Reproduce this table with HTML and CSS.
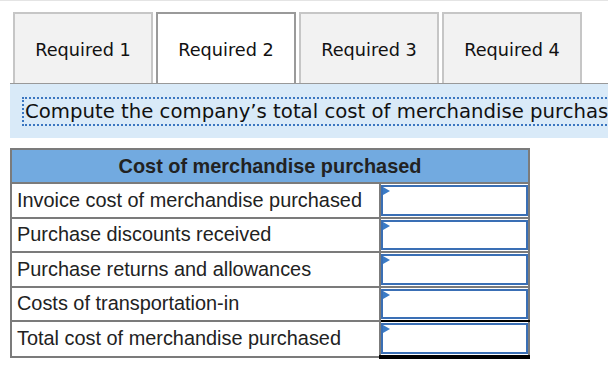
FILE: index.html
```html
<!DOCTYPE html>
<html lang="en">
<head>
  <meta charset="UTF-8" />
  <meta name="viewport" content="width=device-width, initial-scale=1.0" />
  <title>Cost of merchandise purchased</title>
  <link rel="stylesheet" href="styles.css">
</head>
<body>
  <div class="tabs">
    <div class="tab">Required 1</div>
    <div class="tab active">Required 2</div>
    <div class="tab">Required 3</div>
    <div class="tab">Required 4</div>
  </div>
  <div class="prompt">
    <div class="prompt-text">Compute the company’s total cost of merchandise purchased.</div>
  </div>
  <table class="worksheet">
    <tr><th colspan="2">Cost of merchandise purchased</th></tr>
    <tr>
      <td class="label">Invoice cost of merchandise purchased</td>
      <td class="entry"><div class="field"><input type="text"></div></td>
    </tr>
    <tr>
      <td class="label">Purchase discounts received</td>
      <td class="entry"><div class="field"><input type="text"></div></td>
    </tr>
    <tr>
      <td class="label">Purchase returns and allowances</td>
      <td class="entry"><div class="field"><input type="text"></div></td>
    </tr>
    <tr>
      <td class="label">Costs of transportation-in</td>
      <td class="entry single"><div class="field"><input type="text"></div></td>
    </tr>
    <tr>
      <td class="label">Total cost of merchandise purchased</td>
      <td class="entry double"><div class="field"><input type="text"></div></td>
    </tr>
  </table>
</body>
</html>
```

FILE: styles.css
```css
body { margin: 0; font-family: "DejaVu Sans", Verdana, sans-serif; color: #111; background: #fff; border-top: 1px solid #e4e4e4; overflow: hidden; }

/* tab strip */
.tabs { display: flex; gap: 3px; margin: 11px 0 0 10px; padding-left: 3px; border-bottom: 1px solid #999; }
.tab { width: 140px; height: 71px; box-sizing: border-box; border: 2px solid #c6c6c6; border-bottom: 0; background: #f2f2f2; display: flex; align-items: center; justify-content: center; font-size: 17.7px; padding-top: 3px; }
.tab.active { background: #fff; border-color: #9a9a9a; }

/* instructions */
.prompt { margin-left: 10px; height: 54px; box-sizing: border-box; padding: 13px 0 0 12px; background: #d9eaf8; }
.prompt-text { display: inline-block; white-space: nowrap; border: 2px dotted #3a76c0; padding: 0 2px 0 1px; font-size: 19.7px; line-height: 25px; }

/* worksheet table */
.worksheet { margin: 10px 0 0 10px; width: 520px; border-collapse: collapse; border: 2px solid #7b7b7b; font-family: "Liberation Sans", Arial, sans-serif; font-size: 19.9px; color: #222; }
.worksheet th { background: #72aae0; height: 32px; padding: 0; border: 2px solid #7b7b7b; font-weight: bold; }
.worksheet td { border: 2px solid #7b7b7b; height: 31.5px; padding: 0; }
.worksheet td.label { width: 362px; padding-left: 5px; }
.worksheet td.entry { padding: 1px 0 0 0; vertical-align: top; }
.worksheet td.single { border-bottom: 2px solid #000; }
.worksheet td.double { border-bottom: 4px solid #000; }

.field { position: relative; }
.field input { display: block; width: 100%; height: 30.5px; box-sizing: border-box; margin: 0; border: 2px solid #3a6fb5; background: #fff; outline: none; }
.field::before { content: ""; position: absolute; left: 2px; top: 2px; border-left: 7px solid #3b7bc6; border-top: 4px solid transparent; border-bottom: 4px solid transparent; }
```
